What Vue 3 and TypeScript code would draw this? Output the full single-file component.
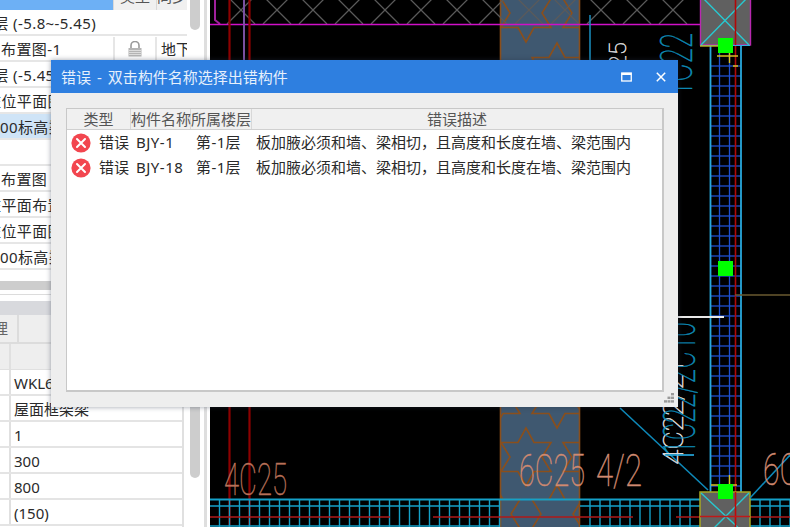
<script setup lang="ts">
const treeRows = [
  { label: '楼层 (-5.8~-5.45)', off: -22, cls: '' },
  { label: '布置图-1', off: 1, cls: 'split' },
  { label: '楼层 (-5.45~-0.05)', off: -22, cls: '' },
  { label: '桩位平面图', off: -14, cls: '' },
  { label: '00标高梁平法', off: 0, cls: 'picked' },
  { label: '', off: 0, cls: '' },
  { label: '布置图', off: 1, cls: '' },
  { label: '桩平面布置图', off: -14, cls: '' },
  { label: '桩位平面图', off: -14, cls: '' },
  { label: '00标高梁平法', off: 0, cls: '' },
]
const propRows = ['WKL6', '屋面框架梁', '1', '300', '800', '(150)']
const errors = [
  { name: 'BJY-1', floor: '第-1层', text: '板加腋必须和墙、梁相切，且高度和长度在墙、梁范围内' },
  { name: 'BJY-18', floor: '第-1层', text: '板加腋必须和墙、梁相切，且高度和长度在墙、梁范围内' },
]
const hatchX = Array.from({ length: 13 }, (_, i) => 241 + i * 36)
const rebarY = Array.from({ length: 43 }, (_, i) => 66 + i * 10)
const bandLeft = Array.from({ length: 29 }, (_, i) => 219.5 + i * 10)
const bandRight = Array.from({ length: 11 }, (_, i) => 590 + i * 10)
const bandFar = Array.from({ length: 4 }, (_, i) => 760 + i * 10)
const starPts = '0,-29 8,-14.5 25,-14.5 16,0 25,14.5 8,14.5 0,29 -8,14.5 -25,14.5 -16,0 -25,-14.5 -8,-14.5'
const stars = [
  [526, 13], [588, 13], [464, 13], [557, 72],
  [557, 399], [495, 399], [526, 457], [588, 457], [557, 514], [495, 514],
]
</script>

<template>
  <div class="screen">
    <aside class="left">
      <div class="left-inner">
        <section class="upper">
          <div class="list">
            <div class="tree">
              <div class="head">
                <div class="hcell sel"></div>
                <div class="hcell mid"><span>类型</span></div>
                <div class="hcell end"><span>同步</span></div>
              </div>
              <div v-for="(r, i) in treeRows" :key="i" class="trow" :class="r.cls">
                <div class="tlabel"><span :style="{ marginLeft: r.off + 'px' }">{{ r.label }}</span></div>
                <template v-if="r.cls === 'split'">
                  <div class="tlock">
                    <svg width="14" height="16" viewBox="0 0 14 16">
                      <path d="M3 7V4.5a4 4 0 0 1 8 0V7" fill="none" stroke="#9a9a9a" stroke-width="1.6" />
                      <rect x="0.5" y="7" width="13" height="8.5" fill="#b4b4b4" />
                      <path d="M1 9.5h12M1 11.5h12M1 13.5h12" stroke="#e6e6e6" stroke-width="0.8" />
                    </svg>
                  </div>
                  <div class="tfloor">地下室</div>
                </template>
              </div>
            </div>
            <div class="vbar"><div class="thumb top"></div></div>
          </div>
          <div class="hbar"></div>
          <div class="hline"></div>
        </section>
        <section class="lower">
          <div class="tabbar"></div>
          <div class="tabs"><div class="tab"><span class="tabtext">管理</span></div></div>
          <div class="pbody">
            <div class="ptable">
              <div class="phead"><div class="pkey"></div><div class="pval"></div></div>
              <div v-for="p in propRows" :key="p" class="prow">
                <div class="pkey"></div>
                <div class="pval">{{ p }}</div>
              </div>
            </div>
            <div class="vbar"><div class="thumb low"></div></div>
          </div>
        </section>
      </div>
    </aside>

    <svg class="canvas" viewBox="210 0 580 527" width="580" height="527">
      <defs>
        <clipPath id="colclip"><rect x="500" y="0" width="80" height="527" /></clipPath>
      </defs>
      <rect x="210" y="0" width="580" height="527" fill="#000" />

      <!-- hatched columns -->
      <g>
        <rect x="500" y="-2" width="80" height="531" fill="#3f5870" />
        <g clip-path="url(#colclip)">
          <polygon v-for="(s, i) in stars" :key="i" :points="starPts" :transform="`translate(${s[0]},${s[1]})`" fill="none" stroke="#8a4f1c" stroke-width="1.6" />
        </g>
        <path d="M500.5 0V527M579.5 0V527" stroke="#8a4f1c" stroke-width="1.6" />
      </g>

      <!-- top beam -->
      <g stroke="#5a5a5a" stroke-width="1.3" fill="none">
        <path v-for="x in hatchX" :key="x" :d="`M${x - 14} 24L${x + 14} -4M${x - 14} -4L${x + 14} 24`" />
      </g>
      <path d="M215 0V20L220 24" stroke="#a0209c" stroke-width="2" fill="none" />
      <path d="M210 24.5H700" stroke="#d010c8" stroke-width="1.6" />

      <!-- verticals -->
      <path d="M229.5 0V527" stroke="#8c0000" stroke-width="2.2" />
      <path d="M249.5 0V527" stroke="#8c0000" stroke-width="2.2" />
      <path d="M244 0V62" stroke="#7a50a0" stroke-width="2" />
      <path d="M590 15V60" stroke="#1a8fc0" stroke-width="1.5" />

      <!-- bottom rebar band -->
      <g stroke="#14a0c8" stroke-width="1.4">
        <path d="M210 499.5H790" stroke-width="1.8" />
        <path d="M210 506H500M580 506H700M750 506H790" />
        <path d="M210 526H500M580 526H700M750 526H790" />
        <path v-for="x in bandLeft" :key="'l' + x" :d="`M${x} 499V527`" />
        <path v-for="x in bandRight" :key="'r' + x" :d="`M${x} 499V527`" />
        <path v-for="x in bandFar" :key="'f' + x" :d="`M${x} 499V527`" />
      </g>
      <path d="M210 517H390M433 517H633M676 517H790" stroke="#b01818" stroke-width="1.5" />

      <!-- right column rebar -->
      <g stroke="#1e50d0" stroke-width="1.3">
        <path v-for="y in rebarY" :key="y" :d="`M711 ${y}H741`" />
        <path d="M719.5 50V490M729.5 50V490" />
      </g>
      <path d="M710.5 40V495M741 40V495" stroke="#28a8dc" stroke-width="1.8" />
      <path d="M735.5 0V527" stroke="#b00808" stroke-width="1.6" />
      <path d="M735 295H790" stroke="#6a5a30" stroke-width="1.4" />

      <!-- pile caps -->
      <rect x="700.5" y="-2" width="50" height="47" fill="#606060" stroke="#b828b0" stroke-width="1.4" />
      <path d="M701 45L749 -4M701 -4L749 45" stroke="#28c8d0" stroke-width="1.4" />
      <path d="M735.5 0V45" stroke="#b00808" stroke-width="1.6" />
      <path d="M700 45.5H750" stroke="#30b0e0" stroke-width="1.2" />
      <path d="M700 46H718" stroke="#c8b820" stroke-width="1.4" />
      <path d="M717 56H738M729.5 53V63M733 66H738" stroke="#d8c020" stroke-width="1.4" fill="none" />

      <rect x="700" y="492" width="50" height="37" fill="#606060" stroke="#a8a820" stroke-width="1.5" />
      <path d="M701 493L746 535M749 493L712 530" stroke="#28c8d0" stroke-width="1.4" />
      <path d="M735.5 492V527" stroke="#c00808" stroke-width="1.6" />
      <path d="M700 516.5H750" stroke="#c01818" stroke-width="1.5" />
      <path d="M711 485H737M729.5 475V485" stroke="#d8c020" stroke-width="1.4" fill="none" />

      <!-- diagonals -->
      <path d="M620 408L708 490" stroke="#0e88b8" stroke-width="1.6" />
      <path d="M750 498L790 455" stroke="#0e88b8" stroke-width="1.6" />

      <!-- green grips -->
      <rect x="718" y="38" width="15" height="15" fill="#00ff00" />
      <rect x="718" y="261" width="15" height="15" fill="#00ff00" />
      <rect x="718" y="484" width="15" height="15" fill="#00ff00" />

      <path d="M678 317H724" stroke="#e8e8e8" stroke-width="2" />

      <!-- CAD annotations -->
      <text class="cad brown" x="224" y="495" textLength="63" lengthAdjust="spacingAndGlyphs" font-size="45">4C25</text>
      <text class="cad salmon" x="519" y="486" textLength="66" lengthAdjust="spacingAndGlyphs" font-size="45">6C25</text>
      <text class="cad salmon" x="596" y="486" textLength="46" lengthAdjust="spacingAndGlyphs" font-size="45">4/2</text>
      <text class="cad salmon" x="763" y="485" textLength="36" lengthAdjust="spacingAndGlyphs" font-size="45">6C</text>
      <text class="cad white" transform="translate(626,42) rotate(-90)" text-anchor="end" font-size="24">25</text>
      <text class="cad cyan" transform="translate(692,97) rotate(-90)" textLength="64" lengthAdjust="spacingAndGlyphs" font-size="45">1C22</text>
      <text class="cad white" transform="translate(683,465) rotate(-90)" textLength="108" lengthAdjust="spacingAndGlyphs" font-size="28">4C22/2Y</text>
      <text class="cad cyan" transform="translate(695,455) rotate(-90)" textLength="133" lengthAdjust="spacingAndGlyphs" font-size="45">1C22/2C10</text>
      <path d="M665 455H694" stroke="#28b0e8" stroke-width="1.6" />
    </svg>

    <div class="dialog">
      <header class="titlebar">
        <span class="title">错误 - 双击构件名称选择出错构件</span>
        <div class="winbtns">
          <svg width="11" height="10" viewBox="0 0 11 10">
            <rect x="0.75" y="1" width="9.5" height="8" fill="none" stroke="#fff" stroke-width="1.3" />
            <path d="M0.5 2H10.5" stroke="#fff" stroke-width="2" />
          </svg>
          <svg width="10" height="10" viewBox="0 0 10 10">
            <path d="M0.8 0.8L9.2 9.2M9.2 0.8L0.8 9.2" stroke="#fff" stroke-width="1.5" />
          </svg>
        </div>
      </header>
      <div class="dbody">
        <div class="grid">
          <div class="ghead">
            <div class="gh g1">类型</div>
            <div class="gh g2">构件名称</div>
            <div class="gh g3">所属楼层</div>
            <div class="gh g4">错误描述</div>
          </div>
          <div v-for="e in errors" :key="e.name" class="grow">
            <div class="gicon">
              <svg width="20" height="20" viewBox="0 0 20 20">
                <circle cx="10" cy="10" r="9.6" fill="#f2464f" />
                <path d="M6 6L14 14M14 6L6 14" stroke="#fff" stroke-width="2" stroke-linecap="round" />
              </svg>
            </div>
            <div class="gtype">错误</div>
            <div class="gname">{{ e.name }}</div>
            <div class="gfloor">{{ e.floor }}</div>
            <div class="gtext">{{ e.text }}</div>
          </div>
        </div>
        <svg class="grip" width="10" height="10" viewBox="0 0 10 10">
          <g fill="#9a9a9a">
            <rect x="7" y="0" width="3" height="2.4" />
            <rect x="3.5" y="3.6" width="3" height="2.4" />
            <rect x="7" y="3.6" width="3" height="2.4" />
            <rect x="0" y="7.2" width="3" height="2.4" />
            <rect x="3.5" y="7.2" width="3" height="2.4" />
            <rect x="7" y="7.2" width="3" height="2.4" />
          </g>
        </svg>
      </div>
    </div>
  </div>
</template>

<style scoped>
.screen {
  position: relative;
  display: flex;
  width: 790px;
  height: 527px;
  overflow: hidden;
  background: #fff;
  font-family: "Noto Sans", "Noto Sans CJK SC", sans-serif;
  font-size: 15px;
  color: #2a2a2a;
}
.left {
  flex: none;
  width: 210px;
  height: 527px;
  overflow: hidden;
  background: #fff;
}
.left-inner {
  box-sizing: border-box;
  width: 207px;
  height: 527px;
  border-right: 3px solid #dedede;
  display: flex;
  flex-direction: column;
}
.upper {
  flex: none;
  height: 301px;
}
.list {
  display: flex;
  height: 281px;
  overflow: hidden;
}
.tree {
  flex: none;
  width: 187px;
  overflow: hidden;
}
.head {
  display: flex;
  height: 10px;
  overflow: hidden;
  line-height: 10px;
  font-size: 15px;
}
.hcell {
  overflow: hidden;
  background: #f0f0f0;
  text-align: center;
  color: #555;
  box-sizing: border-box;
}
.hcell span {
  display: block;
  margin-top: -9px;
}
.hcell.sel {
  width: 113px;
  background: #6db0f5;
}
.hcell.mid {
  width: 44px;
  border-left: 1px solid #d8d8d8;
  border-right: 1px solid #d8d8d8;
}
.hcell.end {
  width: 30px;
}
.trow {
  box-sizing: border-box;
  display: flex;
  height: 26px;
  padding-top: 1px;
  border-bottom: 2px solid #e6e6e6;
  line-height: 24px;
  white-space: nowrap;
  overflow: hidden;
}
.trow.picked {
  background: #cfe4f7;
}
.tlabel {
  flex: 1;
  overflow: hidden;
  letter-spacing: 0.4px;
}
.tlabel span {
  display: inline-block;
}
.split .tlabel {
  flex: none;
  width: 113px;
}
.tlock {
  flex: none;
  box-sizing: border-box;
  width: 44px;
  display: flex;
  align-items: center;
  justify-content: center;
  border-left: 2px solid #e6e6e6;
  border-right: 2px solid #e6e6e6;
}
.tfloor {
  flex: none;
  width: 30px;
  padding-left: 4px;
  box-sizing: border-box;
  overflow: hidden;
}
.vbar {
  flex: none;
  width: 10px;
  margin-left: 3px;
}
.thumb {
  width: 10px;
  background: #cdcdcd;
  border-radius: 0 0 5px 5px;
}
.thumb.top {
  height: 30px;
}
.thumb.low {
  height: 109px;
  margin-top: 25px;
}
.hbar {
  height: 9px;
  background: #cdcdcd;
}
.hline {
  margin-top: 4px;
  height: 1px;
  background: #dcdcdc;
}
.lower {
  flex: 1;
  min-height: 0;
  display: flex;
  flex-direction: column;
}
.tabbar {
  flex: none;
  height: 14px;
  background: #d8d9dd;
}
.tabs {
  flex: none;
  box-sizing: border-box;
  height: 29px;
  background: #eeeeee;
  border-bottom: 2px solid #dcdcdc;
  line-height: 27px;
  color: #666;
}
.tab {
  box-sizing: border-box;
  width: 19px;
  height: 27px;
  overflow: hidden;
  white-space: nowrap;
  border-right: 2px solid #dcdcdc;
}
.tabtext {
  display: inline-block;
  margin-left: -22px;
}
.pbody {
  flex: 1;
  min-height: 0;
  display: flex;
  overflow: hidden;
}
.ptable {
  flex: none;
  box-sizing: border-box;
  width: 184px;
  border-right: 2px solid #e0e0e0;
  margin-right: 3px;
}
.phead {
  display: flex;
  height: 26px;
  background: #eeeeee;
  border-bottom: 1px solid #e0e0e0;
  box-sizing: border-box;
}
.prow {
  box-sizing: border-box;
  display: flex;
  height: 26px;
  border-bottom: 2px solid #e4e4e4;
  line-height: 24px;
}
.pkey {
  flex: none;
  box-sizing: border-box;
  width: 11px;
  border-right: 2px solid #e0e0e0;
}
.pval {
  flex: 1;
  padding: 1px 0 0 3px;
  white-space: nowrap;
  overflow: hidden;
}
.canvas {
  flex: none;
  display: block;
}
.cad {
  font-family: Roboto, "Liberation Sans", sans-serif;
  font-weight: 100;
  stroke-width: 0.5px;
}
.brown { fill: #b87058; stroke: #b87058; }
.salmon { fill: #d08a70; stroke: #d08a70; }
.white { fill: #dcdcdc; stroke: #dcdcdc; }
.cyan { fill: #0e8cb8; stroke: #0e8cb8; }
.dialog {
  position: absolute;
  left: 51px;
  top: 60px;
  width: 627px;
  height: 347px;
  display: flex;
  flex-direction: column;
  background: #eeeeee;
  box-shadow: 0 0 5px rgba(40, 50, 70, 0.45);
}
.titlebar {
  flex: none;
  height: 33px;
  display: flex;
  align-items: center;
  justify-content: space-between;
  padding: 0 12px 0 10px;
  background: #2e7fe0;
  color: #e6f0fc;
}
.title {
  word-spacing: 2px;
}
.winbtns {
  display: flex;
  align-items: center;
  gap: 24px;
}
.dbody {
  position: relative;
  flex: 1;
  min-height: 0;
  padding: 15px 14px 15px 15px;
}
.grid {
  box-sizing: border-box;
  height: 100%;
  background: #fff;
  border: 1px solid #c8c8c8;
  border-right-width: 2px;
  border-bottom-width: 2px;
}
.ghead {
  display: flex;
  height: 20px;
  line-height: 20px;
  background: #f0f0f0;
  border-bottom: 1px solid #d0d0d0;
  color: #555;
}
.gh {
  box-sizing: border-box;
  flex: none;
  text-align: center;
  white-space: nowrap;
  border-right: 1px solid #d8d8d8;
}
.g1 { width: 64px; }
.g2 { width: 60px; }
.g3 { width: 61px; }
.g4 { flex: 1; border-right: 0; }
.grow {
  display: flex;
  align-items: center;
  height: 25px;
  line-height: 25px;
  white-space: nowrap;
}
.gicon {
  flex: none;
  width: 32px;
  padding-left: 4px;
  box-sizing: border-box;
  display: flex;
  align-items: center;
}
.gtype { flex: none; width: 38px; }
.gname { flex: none; width: 59px; letter-spacing: 0.5px; margin-left: -1px; margin-right: 1px; }
.gfloor { flex: none; width: 60px; letter-spacing: 0.4px; }
.gtext { flex: none; }
.grip {
  position: absolute;
  right: 4px;
  bottom: 4px;
}
</style>
